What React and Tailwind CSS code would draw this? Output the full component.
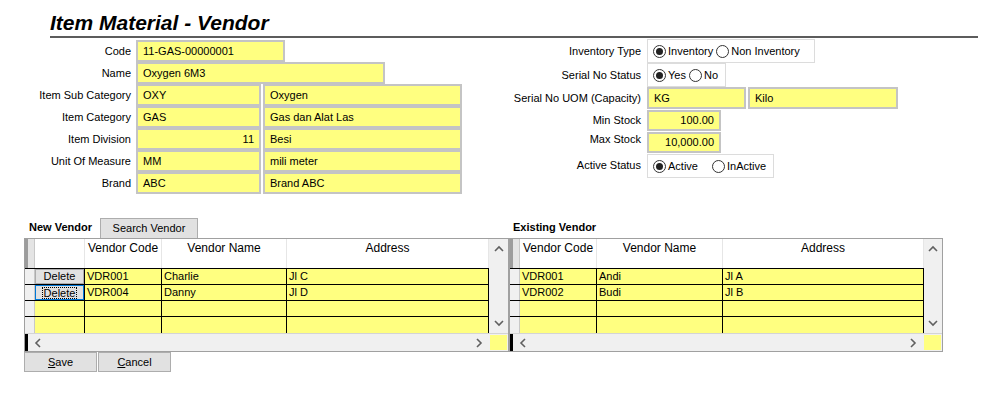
import { memo } from 'react'

const FONT = "font-['Liberation_Sans',Arial,sans-serif]"

const LEFT_FIELDS = [
  { label: 'Code', a: '11-GAS-00000001', aw: 'w-[149px]' },
  { label: 'Name', a: 'Oxygen 6M3', aw: 'w-[249px]' },
  { label: 'Item Sub Category', a: 'OXY', b: 'Oxygen' },
  { label: 'Item Category', a: 'GAS', b: 'Gas dan Alat Las' },
  { label: 'Item Division', a: '11', b: 'Besi', right: true },
  { label: 'Unit Of Measure', a: 'MM', b: 'mili meter' },
  { label: 'Brand', a: 'ABC', b: 'Brand ABC' },
]

function Input({ value, className = '', right }) {
  return (
    <div className={`h-full bg-[#ffff80] border-2 border-[#c4c4c4] px-[5px] flex items-center whitespace-nowrap ${right ? 'justify-end' : ''} ${className}`}>
      {value}
    </div>
  )
}

function Radio({ checked, label }) {
  return (
    <span className="flex items-center gap-[2px]">
      <span className="w-[13px] h-[13px] rounded-full border border-[#333] bg-white flex items-center justify-center">
        {checked && <span className="w-[7px] h-[7px] rounded-full bg-[#222]" />}
      </span>
      <span>{label}</span>
    </span>
  )
}

function RadioBox({ children, className = '' }) {
  return (
    <div className={`h-full border border-[#dcdcdc] flex items-center px-[5px] ${className}`}>{children}</div>
  )
}

function Chevron({ dir }) {
  const d = {
    up: 'M1 6 L5 2 L9 6',
    down: 'M1 2 L5 6 L9 2',
    left: 'M6 1 L2 5 L6 9',
    right: 'M2 1 L6 5 L2 9',
  }[dir]
  const horiz = dir === 'left' || dir === 'right'
  return (
    <svg width={horiz ? 8 : 10} height={horiz ? 10 : 8} viewBox={horiz ? '0 0 8 10' : '0 0 10 8'}>
      <path d={d} fill="none" stroke="#606060" strokeWidth="1.6" />
    </svg>
  )
}

function DeleteButton({ focused }) {
  return (
    <div className={`h-full w-full flex items-center justify-center ${focused ? 'border border-[#0078d7] bg-[#e1e1e1]' : 'border border-[#adadad] bg-[#e1e1e1]'}`}>
      <span className={focused ? 'border border-dotted border-black leading-[10px] px-[1px]' : ''}>Delete</span>
    </div>
  )
}

function Grid({ cols, rows, withDelete, className = '' }) {
  return (
    <div className={`border border-[#a0a0a0] flex flex-col ${className}`}>
      <div className="flex">
        <div className="flex-1 flex flex-col">
          {/* header */}
          <div className="flex h-[30px] bg-white border-b border-black">
            <div className="w-[10px] bg-[#e4e4e4] border-l-[3px] border-[#9c9c9c] border-r border-r-[#c8c8c8]" />
            {withDelete && <div className="w-[50px] border-r border-[#e6e6e6]" />}
            {cols.map((c) => (
              <div key={c.label} className={`${c.w} border-r border-[#e6e6e6] text-[12px] ${c.left ? 'pl-[3px]' : 'text-center'}`}>
                {c.label}
              </div>
            ))}
          </div>
          {/* rows */}
          {rows.map((r, i) => (
            <div key={i} className="flex h-[16px] border-b border-black last:border-b-0">
              <div className="w-[10px] bg-[#f0f0f0] border-r border-[#c8c8c8]" />
              {withDelete && (
                <div className="w-[50px] border-r border-black bg-[#ffff80]">
                  {r.length > 0 && <DeleteButton focused={i === 1} />}
                </div>
              )}
              {cols.map((c, j) => (
                <div key={c.label} className={`${c.w} border-r border-black bg-[#ffff80] pl-[2px] leading-[15px] whitespace-nowrap`}>
                  {r[j] || ''}
                </div>
              ))}
            </div>
          ))}
        </div>
        {/* vertical scrollbar */}
        <div className="w-[19px] bg-[#f0f0f0] flex flex-col items-center justify-between py-[6px]">
          <Chevron dir="up" />
          <Chevron dir="down" />
        </div>
      </div>
      {/* horizontal scrollbar */}
      <div className="flex h-[18px] border-t border-[#d4d4d4]">
        <div className="flex-1 flex items-center justify-between bg-[#f0f0f0] border-l-[3px] border-black pl-[6px] pr-[6px]">
          <Chevron dir="left" />
          <Chevron dir="right" />
        </div>
        <div className="w-[19px] bg-[#f0f0f0] p-[1px]">
          <div className="h-full w-full bg-[#ffff80]" />
        </div>
      </div>
    </div>
  )
}

function Btn({ children, className = '' }) {
  return (
    <div className={`h-[20px] bg-[#e1e1e1] border border-[#adadad] flex items-center justify-center ${className}`}>{children}</div>
  )
}

function App() {
  return (
    <div className={`w-[1000px] h-[400px] bg-white text-[11px] text-black ${FONT}`}>
      {/* Title */}
      <div className="pt-[11px] pl-[50px] pr-[22px]">
        <h1 className="border-b-2 border-[#5c5c5c] text-[21px] font-bold italic leading-[24px] pb-[1px]">
          Item Material - Vendor
        </h1>
      </div>

      {/* Form */}
      <div className="flex items-start mt-[2px]">
        <div className="w-[500px] grid grid-cols-[131px_1fr] gap-x-[5px] auto-rows-[22px]">
          {LEFT_FIELDS.map((f) => (
            <div key={f.label} className="contents">
              <div className="text-right self-center">{f.label}</div>
              {f.b ? (
                <div className="flex gap-[2px]">
                  <Input value={f.a} right={f.right} className="w-[125px]" />
                  <Input value={f.b} className="w-[199px]" />
                </div>
              ) : (
                <Input value={f.a} className={f.aw} />
              )}
            </div>
          ))}
        </div>

        <div className="grid grid-cols-[141px_1fr] content-start gap-x-[6px] -mt-[1px]">
          <div className="text-right self-center">Inventory Type</div>
          <div className="h-[24px]">
            <RadioBox className="w-[168px] gap-[3px]">
              <Radio checked label="Inventory" />
              <Radio label="Non Inventory" />
            </RadioBox>
          </div>
          <div className="text-right self-center">Serial No Status</div>
          <div className="h-[24px]">
            <RadioBox className="w-[79px] gap-[3px]">
              <Radio checked label="Yes" />
              <Radio label="No" />
            </RadioBox>
          </div>
          <div className="text-right self-center">Serial No UOM (Capacity)</div>
          <div className="h-[22px] flex gap-[2px]">
            <Input value="KG" className="w-[99px]" />
            <Input value="Kilo" className="w-[150px]" />
          </div>
          <div className="text-right self-center">Min Stock</div>
          <div className="h-[21px] mt-[1px]">
            <Input value="100.00" right className="w-[74px]" />
          </div>
          <div className="text-right self-start">Max Stock</div>
          <div className="h-[21px] mt-[1px]">
            <Input value="10,000.00" right className="w-[74px]" />
          </div>
          <div className="text-right self-center">Active Status</div>
          <div className="h-[24px] mt-[1px]">
            <RadioBox className="w-[127px] gap-[14px]">
              <Radio checked label="Active" />
              <Radio label="InActive" />
            </RadioBox>
          </div>
        </div>
      </div>

      {/* Vendors */}
      <div className="flex mt-[24px] pl-[24px]">
        <div className="flex flex-col">
          <div className="flex items-end h-[20px]">
            <span className="font-bold pl-[5px] w-[76px] pb-[3px]">New Vendor</span>
            <Btn className="w-[98px] h-[20px] border-b-0">Search Vendor</Btn>
          </div>
          <Grid
            withDelete
            className="w-[485px]"
            cols={[
              { label: 'Vendor Code', w: 'w-[77px]', left: true },
              { label: 'Vendor Name', w: 'w-[125px]' },
              { label: 'Address', w: 'w-[202px]' },
            ]}
            rows={[
              ['VDR001', 'Charlie', 'Jl C'],
              ['VDR004', 'Danny', 'Jl D'],
              [],
              [],
            ]}
          />
          <div className="flex gap-[1px]">
            <Btn className="w-[73px]"><span><u>S</u>ave</span></Btn>
            <Btn className="w-[73px]"><span><u>C</u>ancel</span></Btn>
          </div>
        </div>

        <div className="flex flex-col">
          <div className="flex items-end h-[20px]">
            <span className="font-bold pl-[4px] pb-[3px]">Existing Vendor</span>
          </div>
          <Grid
            className="w-[434px]"
            cols={[
              { label: 'Vendor Code', w: 'w-[77px]', left: true },
              { label: 'Vendor Name', w: 'w-[126px]' },
              { label: 'Address', w: 'w-[201px]' },
            ]}
            rows={[
              ['VDR001', 'Andi', 'Jl A'],
              ['VDR002', 'Budi', 'Jl B'],
              [],
              [],
            ]}
          />
        </div>
      </div>
    </div>
  )
}

export default memo(App)
